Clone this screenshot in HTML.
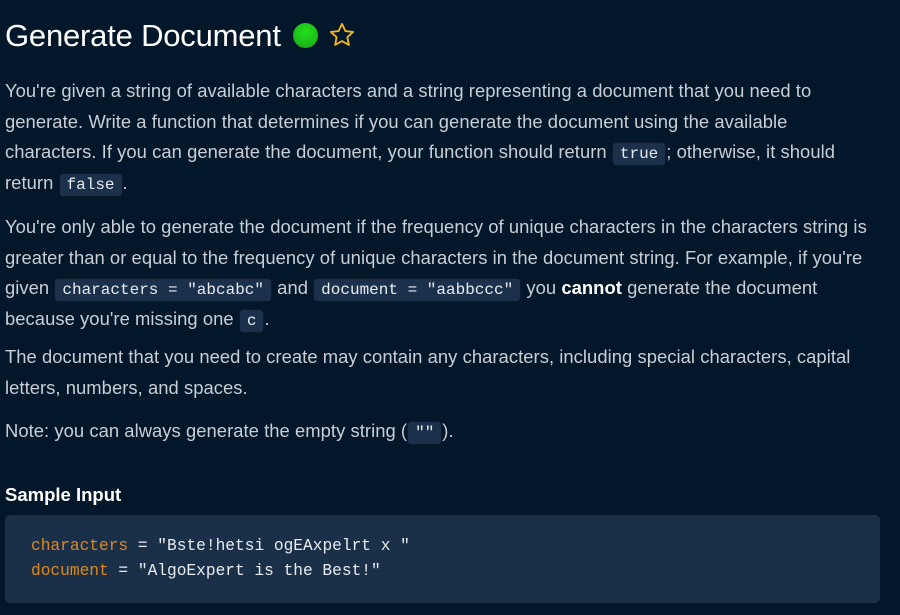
<!DOCTYPE html>
<html><head><meta charset="utf-8"><style>
html,body{margin:0;padding:0;background:#02172a;width:900px;height:615px;overflow:hidden}
body{font-family:"Liberation Sans",sans-serif;color:#c9ced6;font-size:18.4px}
h1{position:absolute;left:5px;top:18px;margin:0;font-size:31px;font-weight:normal;color:#fff;letter-spacing:-0.2px;white-space:nowrap}
.dot{display:inline-block;width:25px;height:25px;border-radius:50%;background:radial-gradient(circle at 50% 35%,#22e01a,#1aa51a);vertical-align:-2px;margin-left:12px}
p{position:absolute;left:5px;margin:0;line-height:30.5px;white-space:nowrap;letter-spacing:0.05px}
code{font-family:"Liberation Mono",monospace;font-size:16px;line-height:16px;color:#e8ecf0;background:#1b304a;border:1px solid #0c1a2a;border-radius:4px;padding:3px 7px;letter-spacing:0;display:inline-block;vertical-align:0}
h2{position:absolute;left:5px;top:484px;margin:0;font-size:18.5px;font-weight:bold;color:#fff}
.box{position:absolute;left:5px;top:515px;width:875px;height:88px;background:#1a3049;border-radius:5px}
pre{margin:0;position:absolute;left:26px;top:19px;font-family:"Liberation Mono",monospace;font-size:16.2px;line-height:25px;color:#e8ecf0}
.o{color:#e0871c}
</style></head><body>
<h1>Generate Document<span class="dot"></span>
<svg width="28" height="28" viewBox="0 0 24 24" style="vertical-align:-3px;margin-left:2px"><path d="M12 2.5l2.9 6.1 6.6.8-4.9 4.5 1.3 6.6L12 17.2l-5.9 3.3 1.3-6.6-4.9-4.5 6.6-.8z" fill="none" stroke="#f0b429" stroke-width="1.6" stroke-linejoin="round"/></svg></h1>
<p style="top:76px">You're given a string of available characters and a string representing a document that you need to<br>generate. Write a function that determines if you can generate the document using the available<br>characters. If you can generate the document, your function should return <code>true</code>; otherwise, it should<br>return <code>false</code>.</p>
<p style="top:212px">You're only able to generate the document if the frequency of unique characters in the characters string is<br>greater than or equal to the frequency of unique characters in the document string. For example, if you're<br>given <code>characters = "abcabc"</code> and <code>document = "aabbccc"</code> you <b style="color:#fff">cannot</b> generate the document<br>because you're missing one <code>c</code>.</p>
<p style="top:342px">The document that you need to create may contain any characters, including special characters, capital<br>letters, numbers, and spaces.</p>
<p style="top:416px">Note: you can always generate the empty string (<code>""</code>).</p>
<h2>Sample Input</h2>
<div class="box"><pre><span class="o">characters</span> = "Bste!hetsi ogEAxpelrt x "
<span class="o">document</span> = "AlgoExpert is the Best!"</pre></div>
</body></html>
